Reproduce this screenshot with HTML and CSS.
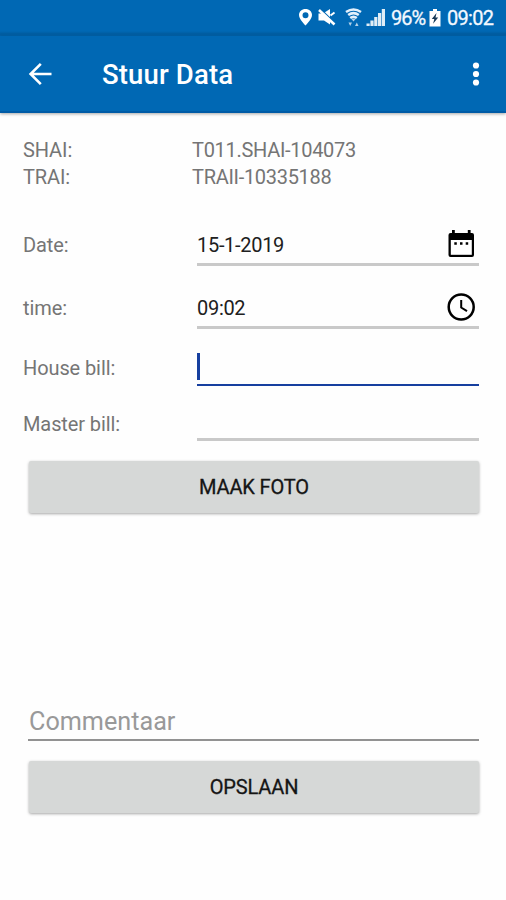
FILE: index.html
```
<!DOCTYPE html>
<html lang="nl">
<head>
<meta charset="utf-8">
<title>Stuur Data</title>
<link rel="stylesheet" href="styles.css">
</head>
<body>
<div class="status">
  <svg class="status-icons" width="96" height="36" viewBox="0 0 96 36" fill="#fff">
    <path fill-rule="evenodd" d="M6.500 9C2.800 9 0 11.600 0 15c0 4.300 6.500 10.500 6.500 10.500S13 19.300 13 15c0-3.400-2.800-6-6.500-6zm0 3.300a3 3 0 1 1 0 6 3 3 0 0 1 0-6z"/>
    <path d="M19.500 13.500h4.500l7-4.500v15.500L25 20.500h-5.500z"/>
    <path d="M22 9.500l14.500 14" fill="none" stroke="#0068b4" stroke-width="1.500"/>
    <path d="M20 10l15.500 14.500" fill="none" stroke="#fff" stroke-width="2.600"/>
    <path d="M31.500 15.500l4-3" fill="none" stroke="#fff" stroke-width="2"/>
    <path d="M47 12q7.500-5 15 0M49.200 15q5.300-3.800 10.600 0M51.200 18q3.300-2.600 6.600 0" fill="none" stroke="#e4f0fb" stroke-width="2.500"/>
    <path d="M52 18.500h5l-2.500 3zM49.500 22.500h3.500L51.200 26zM56 26h3.500l-1.700-3.500z" opacity=".7"/>
    <path d="M67.500 23.500h3.200V26h-3.200zM71.400 20.500h3.200V26h-3.200zM75.200 17h3.200v9h-3.200zM79 13h3.200v13H79zM82.800 9H86v17h-3.200z" opacity=".88"/>
  </svg>
  <span class="battery-text">96%</span>
  <svg class="battery" width="12" height="18" viewBox="0 0 12 18">
    <path d="M4 0h4v2h3.500v15.500H.5V2H4z" fill="#fff"/>
    <path d="M7.500 4L2.800 10h2.500l-1.200 4.800L9.200 8.500H6.500z" fill="#173957"/>
  </svg>
  <span class="clock">09:02</span>
</div>
<header class="bar">
  <svg class="back" width="24" height="24" viewBox="0 0 24 24" fill="none" stroke="#fff" stroke-width="2.600"><path d="M23.500 12H2.500M12.800 1.800L2.600 12l10.200 10.200"/></svg>
  <h1 class="title">Stuur Data</h1>
  <svg class="more" width="10" height="24" viewBox="0 0 10 24" fill="#fff"><circle cx="5" cy="3.500" r="3.100"/><circle cx="5" cy="12" r="3.100"/><circle cx="5" cy="20.500" r="3.100"/></svg>
</header>
<main class="form">
  <div class="info"><span class="label">SHAI:</span><span class="value">T011.SHAI-104073</span></div>
  <div class="info"><span class="label">TRAI:</span><span class="value">TRAII-10335188</span></div>
  <div class="row date">
    <span class="label">Date:</span>
    <div class="field"><span class="value">15-1-2019</span>
      <svg class="icon" width="28" height="30" viewBox="0 0 28 30"><path d="M3.500 4H5V1h2.800v3h13V1h2.800v3H25q2 0 2 2v20q0 2-2 2H3.500q-2 0-2-2V6q0-2 2-2z"/><path d="M3.800 11h21v14.800h-21z" fill="#fff"/><path d="M7.300 13.200h2.500v2.500H7.300zM13 13.200h2.500v2.500H13zM18.700 13.200h2.500v2.500h-2.500z"/></svg>
    </div>
  </div>
  <div class="row time">
    <span class="label">time:</span>
    <div class="field"><span class="value">09:02</span>
      <svg class="icon" width="28" height="30" viewBox="0 0 28 30" fill="none" stroke="#000"><circle cx="14.200" cy="15" r="12.500" stroke-width="2.500"/><path d="M14.200 8v7.500l5.800 3.700" stroke-width="2"/></svg>
    </div>
  </div>
  <div class="row house"><span class="label">House bill:</span><div class="field focused"><span class="caret"></span></div></div>
  <div class="row master"><span class="label">Master bill:</span><div class="field"></div></div>
  <button class="button photo"><span>MAAK FOTO</span></button>
  <div class="comment"><span>Commentaar</span></div>
  <button class="button save"><span>OPSLAAN</span></button>
</main>
</body>
</html>
```
FILE: styles.css
```
* { box-sizing: border-box; }
body {
  margin: 0;
  width: 506px;
  height: 900px;
  overflow: hidden;
  background: #fefefe;
  color: #202020;
  font: 20px/27px Roboto, sans-serif;
}
.status {
  display: flex;
  height: 36px;
  padding-left: 299px;
  background: linear-gradient(#0068b4 31px, #005c9f 34px, #0064ad 36px);
  color: #f3f8ff;
  line-height: 36px;
  white-space: nowrap;
}
.status-icons { flex: none; margin-right: -4px; }
.battery-text { width: 38px; font-size: 20px; letter-spacing: -1px; line-height: 37px; -webkit-text-stroke: .3px; }
.battery { margin: 9px 6px 0 0; flex: none; }
.clock { font-size: 20px; letter-spacing: -.7px; -webkit-text-stroke: .3px; }
.bar {
  display: flex;
  align-items: center;
  height: 77px;
  padding: 0 25px 0 28px;
  background: #0068b4;
  border-bottom: 2px solid #005ba6;
  box-shadow: 0 1px 3px rgba(0, 0, 0, .35);
  color: #fff;
}
.title { flex: 1; margin: 2px 0 0 50px; font-size: 27.500px; font-weight: 500; letter-spacing: .15px; line-height: 32px; }
.form { display: flex; flex-direction: column; padding: 24px 27px 0 23px; }
.info { display: flex; height: 27px; color: #757575; }
.value { letter-spacing: -.3px; }
.label { width: 169px; color: #757575; letter-spacing: -.1px; }
.row { display: flex; align-items: flex-end; }
.row .label { width: 174px; padding-bottom: 7px; line-height: 27px; }
.row .value { margin-left: -1px; }
.field {
  display: flex;
  justify-content: space-between;
  flex: 1;
  height: 38px;
  padding: 4px 4px 0 1px;
  border-bottom: 3px solid #c9c9c9;
}
.icon { flex: none; margin-top: -3px; }
.date { height: 75px; }
.time { height: 63px; }
.house { height: 57px; }
.house .label { padding-bottom: 4px; }
.master { height: 55px; }
.master .label { padding-bottom: 3px; }
.focused { padding: 5px 0 0; border-color: #163f9f; border-bottom-width: 2px; }
.caret { width: 3px; height: 27px; background: #163f9f; }
.button {
  height: 52px;
  margin: 20px 0 0 6px;
  padding: 0;
  border: 0;
  border-radius: 2px;
  background: #d6d8d7;
  box-shadow: 0 1px 3px rgba(0, 0, 0, .35);
  color: #151515;
  font: 400 20px/51px Roboto, sans-serif;
  letter-spacing: -.15px;
  -webkit-text-stroke: .3px;
}
.comment {
  height: 38px;
  margin: 190px 0 0 5px;
  padding-left: 1px;
  border-bottom: 2px solid #929292;
  color: #999;
  font-size: 25.200px;
  line-height: 37px;
}
```
